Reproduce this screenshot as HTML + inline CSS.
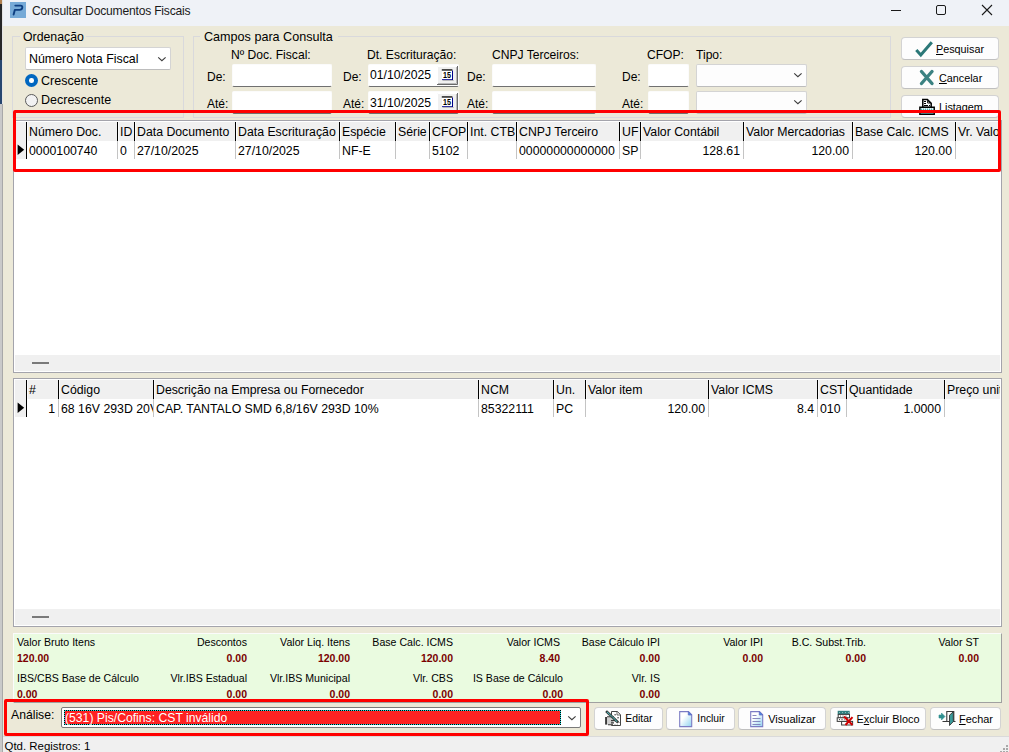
<!DOCTYPE html>
<html><head><meta charset="utf-8">
<style>
*{box-sizing:border-box;margin:0;padding:0}
html,body{width:1009px;height:752px;overflow:hidden;background:#ece9d8;font-family:"Liberation Sans",sans-serif;color:#000;position:relative}
.a{position:absolute}
.t{position:absolute;white-space:pre;line-height:1;font-size:12px}
.r{text-align:right}
.inp{position:absolute;background:#fff;border:1px solid #fbfbfb;border-bottom:1px solid #707070;border-radius:2px}
.cmb{position:absolute;background:#fdfdfd;border:1px solid #d4d4d4;border-radius:2px;border-bottom-color:#bdbdbd}
.btn{position:absolute;background:#fdfdfd;border:1px solid #d3d3d3;border-bottom-color:#c0c0c0;border-radius:4px}
.gb{position:absolute;border:1px solid #d9d9dc;}
.hdr{position:absolute;background:#f0f0f0}
.vs{position:absolute;width:1px;background:#000}
.vg{position:absolute;width:1px;background:#c8c8c8}
.grn .t{font-size:11px}
.val{font-weight:bold;color:#800000;font-size:10.5px!important}
</style></head><body>
<!-- desktop strip -->
<div class="a" style="left:0;top:0;width:2px;height:752px;background:#c9c9c9"></div>
<div class="a" style="left:0;top:0;width:2px;height:4px;background:#b08050"></div>
<div class="a" style="left:0;top:4px;width:2px;height:56px;background:#262626"></div>
<div class="a" style="left:0;top:60px;width:2px;height:44px;background:#26466f"></div>
<div class="a" style="left:2px;top:0;width:1px;height:104px;background:#e4e4e4"></div>
<div class="a" style="left:2px;top:104px;width:1px;height:648px;background:#a8a8a8"></div>
<!-- title bar -->
<div class="a" style="left:3px;top:0;width:1006px;height:26px;background:#eff2f7"></div>
<div class="a" style="left:10px;top:2px;width:16px;height:16px;background:#76aad7"></div>
<svg class="a" style="left:10px;top:2px" width="16" height="16" viewBox="0 0 16 16"><path d="M5.3 3.6 H10.5 Q12.6 3.6 12.3 5.6 Q12 7.8 9.6 7.9 H4.8 L3.6 12.6" fill="none" stroke="#0e3f82" stroke-width="1.9" stroke-linecap="round" stroke-linejoin="round"/></svg>
<div class="t" style="left:32px;top:4.8px;font-size:12.1px;letter-spacing:-0.2px;color:#1a1a1a;-webkit-font-smoothing:antialiased">Consultar Documentos Fiscais</div>
<div class="a" style="left:891px;top:10px;width:10px;height:1px;background:#1a1a1a"></div>
<div class="a" style="left:936px;top:5px;width:10px;height:10px;border:1px solid #1a1a1a;border-radius:2px"></div>
<svg class="a" style="left:981px;top:4px" width="12" height="12" viewBox="0 0 12 12"><path d="M1 1 L11 11 M11 1 L1 11" stroke="#1a1a1a" stroke-width="1.1"/></svg>

<!-- Ordenacao group -->
<div class="gb" style="left:12px;top:36px;width:172px;height:82px"></div>
<div class="a" style="left:20px;top:30px;width:66px;height:12px;background:#ece9d8"></div>
<div class="t" style="left:23px;top:30.5px;font-size:12.3px">Ordenação</div>
<div class="cmb" style="left:25px;top:47px;width:146px;height:23px;background:#fff"></div>
<div class="t" style="left:29px;top:53px;font-size:12.4px">Número Nota Fiscal</div>
<svg class="a" style="left:157px;top:56px" width="10" height="7" viewBox="0 0 10 7"><path d="M1.2 1.3 L4.9 4.7 L8.6 1.3" fill="none" stroke="#3c3c3c" stroke-width="1.1"/></svg>
<div class="a" style="left:25px;top:74px;width:13px;height:13px;border-radius:50%;background:#0067c0"></div>
<div class="a" style="left:29.2px;top:78.2px;width:4.6px;height:4.6px;border-radius:50%;background:#fff"></div>
<div class="t" style="left:41px;top:74.5px;font-size:12.5px">Crescente</div>
<div class="a" style="left:25px;top:94px;width:13px;height:13px;border-radius:50%;background:#f2f2f2;border:1px solid #5a5a5a"></div>
<div class="t" style="left:41px;top:94.3px;font-size:12.5px">Decrescente</div>

<!-- Campos group -->
<div class="gb" style="left:193px;top:36px;width:698px;height:82px"></div>
<div class="a" style="left:200px;top:30px;width:138px;height:12px;background:#ece9d8"></div>
<div class="t" style="left:204px;top:31px;font-size:12.6px">Campos para Consulta</div>

<div class="t" style="left:231px;top:48.8px;font-size:12.1px">Nº Doc. Fiscal:</div>
<div class="t" style="left:367px;top:48.8px;font-size:12.1px">Dt. Escrituração:</div>
<div class="t" style="left:492px;top:48.8px;font-size:12.1px">CNPJ Terceiros:</div>
<div class="t" style="left:647px;top:48.8px;font-size:12.1px">CFOP:</div>
<div class="t" style="left:696px;top:48.8px;font-size:12.1px">Tipo:</div>

<div class="t" style="left:207px;top:70.8px">De:</div>
<div class="t" style="left:207px;top:97.8px">Até:</div>
<div class="t" style="left:343px;top:70.8px">De:</div>
<div class="t" style="left:343px;top:97.8px">Até:</div>
<div class="t" style="left:467px;top:70.8px">De:</div>
<div class="t" style="left:467px;top:97.8px">Até:</div>
<div class="t" style="left:622px;top:70.8px">De:</div>
<div class="t" style="left:622px;top:97.8px">Até:</div>

<div class="inp" style="left:232px;top:64px;width:100px;height:23px"></div>
<div class="inp" style="left:232px;top:91px;width:100px;height:23px"></div>
<div class="inp" style="left:368px;top:64px;width:91px;height:23px"></div>
<div class="inp" style="left:368px;top:91px;width:91px;height:23px"></div>
<div class="inp" style="left:492px;top:64px;width:104px;height:23px"></div>
<div class="inp" style="left:492px;top:91px;width:104px;height:23px"></div>
<div class="inp" style="left:648px;top:64px;width:41px;height:23px"></div>
<div class="inp" style="left:648px;top:91px;width:41px;height:23px"></div>
<div class="t" style="left:370px;top:69px;font-size:12.2px">01/10/2025</div>
<div class="t" style="left:370px;top:96.7px;font-size:12.2px">31/10/2025</div>
<!-- calendar buttons -->
<svg class="a" style="left:437px;top:66px" width="22" height="20" viewBox="0 0 22 20"><rect x="0" y="0" width="21" height="19" fill="#f0f0f0"/><path d="M0.5 19 V0.5 H20.5" fill="none" stroke="#fff" stroke-width="1"/><path d="M0 18.5 H20.5 V0" fill="none" stroke="#6a6a6a" stroke-width="1"/><path d="M1 17.5 H19.5 V1" fill="none" stroke="#b8b8b8" stroke-width="1"/><rect x="5" y="4" width="11" height="10" fill="#fff"/><rect x="4.8" y="3.3" width="10.6" height="1.3" fill="#000"/><rect x="15" y="4.5" width="1" height="9.5" fill="#00008a"/><rect x="5" y="13.2" width="11" height="0.9" fill="#00008a"/><rect x="5.8" y="14.1" width="11" height="0.8" fill="#b0b0b0"/><text x="10.1" y="12.2" font-family="Liberation Sans" font-weight="bold" font-size="9.4" text-anchor="middle" fill="#000" textLength="8" lengthAdjust="spacingAndGlyphs">15</text></svg>
<svg class="a" style="left:437px;top:93px" width="22" height="20" viewBox="0 0 22 20"><rect x="0" y="0" width="21" height="19" fill="#f0f0f0"/><path d="M0.5 19 V0.5 H20.5" fill="none" stroke="#fff" stroke-width="1"/><path d="M0 18.5 H20.5 V0" fill="none" stroke="#6a6a6a" stroke-width="1"/><path d="M1 17.5 H19.5 V1" fill="none" stroke="#b8b8b8" stroke-width="1"/><rect x="5" y="4" width="11" height="10" fill="#fff"/><rect x="4.8" y="3.3" width="10.6" height="1.3" fill="#000"/><rect x="15" y="4.5" width="1" height="9.5" fill="#00008a"/><rect x="5" y="13.2" width="11" height="0.9" fill="#00008a"/><rect x="5.8" y="14.1" width="11" height="0.8" fill="#b0b0b0"/><text x="10.1" y="12.2" font-family="Liberation Sans" font-weight="bold" font-size="9.4" text-anchor="middle" fill="#000" textLength="8" lengthAdjust="spacingAndGlyphs">15</text></svg>
<div class="cmb" style="left:696px;top:64px;width:111px;height:23px"></div>
<div class="cmb" style="left:696px;top:91px;width:111px;height:23px"></div>
<svg class="a" style="left:793px;top:72px" width="10" height="7" viewBox="0 0 10 7"><path d="M1.2 1.3 L4.9 4.7 L8.6 1.3" fill="none" stroke="#3c3c3c" stroke-width="1.1"/></svg>
<svg class="a" style="left:793px;top:99px" width="10" height="7" viewBox="0 0 10 7"><path d="M1.2 1.3 L4.9 4.7 L8.6 1.3" fill="none" stroke="#3c3c3c" stroke-width="1.1"/></svg>

<!-- buttons right -->
<div class="btn" style="left:901px;top:37px;width:98px;height:23px"></div>
<div class="btn" style="left:901px;top:66px;width:98px;height:23px"></div>
<div class="btn" style="left:901px;top:95px;width:98px;height:23px"></div>
<div class="t" style="left:936px;top:43.5px;font-size:10.8px"><u>P</u>esquisar</div>
<div class="t" style="left:939px;top:72.5px;font-size:10.8px"><u>C</u>ancelar</div>
<div class="t" style="left:939px;top:101.5px;font-size:10.8px"><u>L</u>istagem</div>

<!-- GRID 1 -->
<div class="a" style="left:13px;top:120px;width:989px;height:253px;background:#fff;border:1px solid #a4a4ac"></div>
<div class="hdr" style="left:15px;top:122px;width:985px;height:19px"></div>
<div class="hdr" style="left:15px;top:141px;width:11px;height:18px"></div>
<div class="hdr" style="left:15px;top:355px;width:985px;height:16px"></div>
<div class="a" style="left:32px;top:362px;width:17px;height:2px;background:#7a7a7a"></div>
<div class="a" style="left:26px;top:122px;width:1px;height:19px;background:#000"></div>
<div class="a" style="left:27px;top:122px;width:1px;height:19px;background:#fafafa"></div>
<div class="a" style="left:26px;top:141px;width:1px;height:18px;background:#000"></div>
<div class="a" style="left:117px;top:122px;width:1px;height:19px;background:#000"></div>
<div class="a" style="left:118px;top:122px;width:1px;height:19px;background:#fafafa"></div>
<div class="a" style="left:117px;top:141px;width:1px;height:18px;background:#c4c4c4"></div>
<div class="a" style="left:134px;top:122px;width:1px;height:19px;background:#000"></div>
<div class="a" style="left:135px;top:122px;width:1px;height:19px;background:#fafafa"></div>
<div class="a" style="left:134px;top:141px;width:1px;height:18px;background:#c4c4c4"></div>
<div class="a" style="left:235px;top:122px;width:1px;height:19px;background:#000"></div>
<div class="a" style="left:236px;top:122px;width:1px;height:19px;background:#fafafa"></div>
<div class="a" style="left:235px;top:141px;width:1px;height:18px;background:#c4c4c4"></div>
<div class="a" style="left:339px;top:122px;width:1px;height:19px;background:#000"></div>
<div class="a" style="left:340px;top:122px;width:1px;height:19px;background:#fafafa"></div>
<div class="a" style="left:339px;top:141px;width:1px;height:18px;background:#c4c4c4"></div>
<div class="a" style="left:395px;top:122px;width:1px;height:19px;background:#000"></div>
<div class="a" style="left:396px;top:122px;width:1px;height:19px;background:#fafafa"></div>
<div class="a" style="left:395px;top:141px;width:1px;height:18px;background:#c4c4c4"></div>
<div class="a" style="left:429px;top:122px;width:1px;height:19px;background:#000"></div>
<div class="a" style="left:430px;top:122px;width:1px;height:19px;background:#fafafa"></div>
<div class="a" style="left:429px;top:141px;width:1px;height:18px;background:#c4c4c4"></div>
<div class="a" style="left:467px;top:122px;width:1px;height:19px;background:#000"></div>
<div class="a" style="left:468px;top:122px;width:1px;height:19px;background:#fafafa"></div>
<div class="a" style="left:467px;top:141px;width:1px;height:18px;background:#c4c4c4"></div>
<div class="a" style="left:516px;top:122px;width:1px;height:19px;background:#000"></div>
<div class="a" style="left:517px;top:122px;width:1px;height:19px;background:#fafafa"></div>
<div class="a" style="left:516px;top:141px;width:1px;height:18px;background:#c4c4c4"></div>
<div class="a" style="left:619px;top:122px;width:1px;height:19px;background:#000"></div>
<div class="a" style="left:620px;top:122px;width:1px;height:19px;background:#fafafa"></div>
<div class="a" style="left:619px;top:141px;width:1px;height:18px;background:#c4c4c4"></div>
<div class="a" style="left:640px;top:122px;width:1px;height:19px;background:#000"></div>
<div class="a" style="left:641px;top:122px;width:1px;height:19px;background:#fafafa"></div>
<div class="a" style="left:640px;top:141px;width:1px;height:18px;background:#c4c4c4"></div>
<div class="a" style="left:743px;top:122px;width:1px;height:19px;background:#000"></div>
<div class="a" style="left:744px;top:122px;width:1px;height:19px;background:#fafafa"></div>
<div class="a" style="left:743px;top:141px;width:1px;height:18px;background:#c4c4c4"></div>
<div class="a" style="left:852px;top:122px;width:1px;height:19px;background:#000"></div>
<div class="a" style="left:853px;top:122px;width:1px;height:19px;background:#fafafa"></div>
<div class="a" style="left:852px;top:141px;width:1px;height:18px;background:#c4c4c4"></div>
<div class="a" style="left:955px;top:122px;width:1px;height:19px;background:#000"></div>
<div class="a" style="left:956px;top:122px;width:1px;height:19px;background:#fafafa"></div>
<div class="a" style="left:955px;top:141px;width:1px;height:18px;background:#c4c4c4"></div>
<div class="a" style="left:28px;top:120px;width:89px;height:40px;overflow:hidden"><div class="t" style="left:1px;top:5.59px;font-size:12.3px;">Número Doc.</div></div>
<div class="a" style="left:119px;top:120px;width:15px;height:40px;overflow:hidden"><div class="t" style="left:1px;top:5.59px;font-size:12.3px;">ID</div></div>
<div class="a" style="left:136px;top:120px;width:99px;height:40px;overflow:hidden"><div class="t" style="left:1px;top:5.59px;font-size:12.3px;">Data Documento</div></div>
<div class="a" style="left:237px;top:120px;width:102px;height:40px;overflow:hidden"><div class="t" style="left:1px;top:5.59px;font-size:12.3px;">Data Escrituração</div></div>
<div class="a" style="left:341px;top:120px;width:54px;height:40px;overflow:hidden"><div class="t" style="left:1px;top:5.59px;font-size:12.3px;">Espécie</div></div>
<div class="a" style="left:397px;top:120px;width:32px;height:40px;overflow:hidden"><div class="t" style="left:1px;top:5.59px;font-size:12.3px;">Série</div></div>
<div class="a" style="left:431px;top:120px;width:36px;height:40px;overflow:hidden"><div class="t" style="left:1px;top:5.59px;font-size:12.3px;">CFOP</div></div>
<div class="a" style="left:469px;top:120px;width:47px;height:40px;overflow:hidden"><div class="t" style="left:1px;top:5.59px;font-size:12.3px;">Int. CTB</div></div>
<div class="a" style="left:518px;top:120px;width:101px;height:40px;overflow:hidden"><div class="t" style="left:1px;top:5.59px;font-size:12.3px;">CNPJ Terceiro</div></div>
<div class="a" style="left:621px;top:120px;width:19px;height:40px;overflow:hidden"><div class="t" style="left:1px;top:5.59px;font-size:12.3px;">UF</div></div>
<div class="a" style="left:642px;top:120px;width:101px;height:40px;overflow:hidden"><div class="t" style="left:1px;top:5.59px;font-size:12.3px;">Valor Contábil</div></div>
<div class="a" style="left:745px;top:120px;width:107px;height:40px;overflow:hidden"><div class="t" style="left:1px;top:5.59px;font-size:12.3px;">Valor Mercadorias</div></div>
<div class="a" style="left:854px;top:120px;width:101px;height:40px;overflow:hidden"><div class="t" style="left:1px;top:5.59px;font-size:12.3px;">Base Calc. ICMS</div></div>
<div class="a" style="left:957px;top:120px;width:43px;height:40px;overflow:hidden"><div class="t" style="left:1px;top:5.59px;font-size:12.3px;">Vr. Valor ICMS</div></div>
<div class="a" style="left:28px;top:120px;width:89px;height:40px;overflow:hidden"><div class="t" style="left:1px;top:24.99px;font-size:12.3px">0000100740</div></div>
<div class="a" style="left:119px;top:120px;width:15px;height:40px;overflow:hidden"><div class="t" style="left:1px;top:24.99px;font-size:12.3px">0</div></div>
<div class="a" style="left:136px;top:120px;width:99px;height:40px;overflow:hidden"><div class="t" style="left:1px;top:24.99px;font-size:12.3px">27/10/2025</div></div>
<div class="a" style="left:237px;top:120px;width:102px;height:40px;overflow:hidden"><div class="t" style="left:1px;top:24.99px;font-size:12.3px">27/10/2025</div></div>
<div class="a" style="left:341px;top:120px;width:54px;height:40px;overflow:hidden"><div class="t" style="left:1px;top:24.99px;font-size:12.3px">NF-E</div></div>
<div class="a" style="left:431px;top:120px;width:36px;height:40px;overflow:hidden"><div class="t" style="left:1px;top:24.99px;font-size:12.3px">5102</div></div>
<div class="a" style="left:518px;top:120px;width:101px;height:40px;overflow:hidden"><div class="t" style="left:1px;top:24.99px;font-size:12.3px">00000000000000</div></div>
<div class="a" style="left:621px;top:120px;width:19px;height:40px;overflow:hidden"><div class="t" style="left:1px;top:24.99px;font-size:12.3px">SP</div></div>
<div class="a" style="left:642px;top:120px;width:101px;height:40px;overflow:hidden"><div class="t" style="right:3px;top:24.99px;font-size:12.3px">128.61</div></div>
<div class="a" style="left:745px;top:120px;width:107px;height:40px;overflow:hidden"><div class="t" style="right:3px;top:24.99px;font-size:12.3px">120.00</div></div>
<div class="a" style="left:854px;top:120px;width:101px;height:40px;overflow:hidden"><div class="t" style="right:3px;top:24.99px;font-size:12.3px">120.00</div></div>
<svg class="a" style="left:17px;top:144px" width="8" height="12" viewBox="0 0 8 12"><path d="M0.6 0.6 L7.2 5.8 L0.6 11Z" fill="#000"/></svg>

<!-- GRID 2 -->
<div class="a" style="left:13px;top:378px;width:989px;height:249px;background:#fff;border:1px solid #a4a4ac"></div>
<div class="hdr" style="left:15px;top:380px;width:985px;height:19px"></div>
<div class="hdr" style="left:15px;top:399px;width:11px;height:18px"></div>
<div class="hdr" style="left:15px;top:609px;width:985px;height:16px"></div>
<div class="a" style="left:32px;top:616px;width:17px;height:2px;background:#7a7a7a"></div>
<div class="a" style="left:26px;top:380px;width:1px;height:19px;background:#000"></div>
<div class="a" style="left:27px;top:380px;width:1px;height:19px;background:#fafafa"></div>
<div class="a" style="left:26px;top:399px;width:1px;height:18px;background:#000"></div>
<div class="a" style="left:58px;top:380px;width:1px;height:19px;background:#000"></div>
<div class="a" style="left:59px;top:380px;width:1px;height:19px;background:#fafafa"></div>
<div class="a" style="left:58px;top:399px;width:1px;height:18px;background:#c4c4c4"></div>
<div class="a" style="left:153px;top:380px;width:1px;height:19px;background:#000"></div>
<div class="a" style="left:154px;top:380px;width:1px;height:19px;background:#fafafa"></div>
<div class="a" style="left:153px;top:399px;width:1px;height:18px;background:#c4c4c4"></div>
<div class="a" style="left:478px;top:380px;width:1px;height:19px;background:#000"></div>
<div class="a" style="left:479px;top:380px;width:1px;height:19px;background:#fafafa"></div>
<div class="a" style="left:478px;top:399px;width:1px;height:18px;background:#c4c4c4"></div>
<div class="a" style="left:553px;top:380px;width:1px;height:19px;background:#000"></div>
<div class="a" style="left:554px;top:380px;width:1px;height:19px;background:#fafafa"></div>
<div class="a" style="left:553px;top:399px;width:1px;height:18px;background:#c4c4c4"></div>
<div class="a" style="left:585px;top:380px;width:1px;height:19px;background:#000"></div>
<div class="a" style="left:586px;top:380px;width:1px;height:19px;background:#fafafa"></div>
<div class="a" style="left:585px;top:399px;width:1px;height:18px;background:#c4c4c4"></div>
<div class="a" style="left:708px;top:380px;width:1px;height:19px;background:#000"></div>
<div class="a" style="left:709px;top:380px;width:1px;height:19px;background:#fafafa"></div>
<div class="a" style="left:708px;top:399px;width:1px;height:18px;background:#c4c4c4"></div>
<div class="a" style="left:817px;top:380px;width:1px;height:19px;background:#000"></div>
<div class="a" style="left:818px;top:380px;width:1px;height:19px;background:#fafafa"></div>
<div class="a" style="left:817px;top:399px;width:1px;height:18px;background:#c4c4c4"></div>
<div class="a" style="left:846px;top:380px;width:1px;height:19px;background:#000"></div>
<div class="a" style="left:847px;top:380px;width:1px;height:19px;background:#fafafa"></div>
<div class="a" style="left:846px;top:399px;width:1px;height:18px;background:#c4c4c4"></div>
<div class="a" style="left:944px;top:380px;width:1px;height:19px;background:#000"></div>
<div class="a" style="left:945px;top:380px;width:1px;height:19px;background:#fafafa"></div>
<div class="a" style="left:944px;top:399px;width:1px;height:18px;background:#c4c4c4"></div>
<div class="a" style="left:28px;top:378px;width:30px;height:40px;overflow:hidden"><div class="t" style="left:1px;top:5.59px;font-size:12.3px;">#</div></div>
<div class="a" style="left:60px;top:378px;width:93px;height:40px;overflow:hidden"><div class="t" style="left:1px;top:5.59px;font-size:12.3px;">Código</div></div>
<div class="a" style="left:155px;top:378px;width:323px;height:40px;overflow:hidden"><div class="t" style="left:1px;top:5.59px;font-size:12.3px;">Descrição na Empresa ou Fornecedor</div></div>
<div class="a" style="left:480px;top:378px;width:73px;height:40px;overflow:hidden"><div class="t" style="left:1px;top:5.59px;font-size:12.3px;">NCM</div></div>
<div class="a" style="left:555px;top:378px;width:30px;height:40px;overflow:hidden"><div class="t" style="left:1px;top:5.59px;font-size:12.3px;">Un.</div></div>
<div class="a" style="left:587px;top:378px;width:121px;height:40px;overflow:hidden"><div class="t" style="left:1px;top:5.59px;font-size:12.3px;">Valor item</div></div>
<div class="a" style="left:710px;top:378px;width:107px;height:40px;overflow:hidden"><div class="t" style="left:1px;top:5.59px;font-size:12.3px;">Valor ICMS</div></div>
<div class="a" style="left:819px;top:378px;width:27px;height:40px;overflow:hidden"><div class="t" style="left:1px;top:5.59px;font-size:12.3px;">CST</div></div>
<div class="a" style="left:848px;top:378px;width:96px;height:40px;overflow:hidden"><div class="t" style="left:1px;top:5.59px;font-size:12.3px;">Quantidade</div></div>
<div class="a" style="left:946px;top:378px;width:54px;height:40px;overflow:hidden"><div class="t" style="left:1px;top:5.59px;font-size:12.3px;">Preço unitário</div></div>
<div class="a" style="left:28px;top:378px;width:30px;height:40px;overflow:hidden"><div class="t" style="right:3px;top:24.99px;font-size:12.3px">1</div></div>
<div class="a" style="left:60px;top:378px;width:93px;height:40px;overflow:hidden"><div class="t" style="left:1px;top:24.99px;font-size:12.3px">68 16V 293D 20V</div></div>
<div class="a" style="left:155px;top:378px;width:323px;height:40px;overflow:hidden"><div class="t" style="left:1px;top:24.99px;font-size:12.3px">CAP. TANTALO SMD 6,8/16V 293D 10%</div></div>
<div class="a" style="left:480px;top:378px;width:73px;height:40px;overflow:hidden"><div class="t" style="left:1px;top:24.99px;font-size:12.3px">85322111</div></div>
<div class="a" style="left:555px;top:378px;width:30px;height:40px;overflow:hidden"><div class="t" style="left:1px;top:24.99px;font-size:12.3px">PC</div></div>
<div class="a" style="left:587px;top:378px;width:121px;height:40px;overflow:hidden"><div class="t" style="right:3px;top:24.99px;font-size:12.3px">120.00</div></div>
<div class="a" style="left:710px;top:378px;width:107px;height:40px;overflow:hidden"><div class="t" style="right:3px;top:24.99px;font-size:12.3px">8.4</div></div>
<div class="a" style="left:819px;top:378px;width:27px;height:40px;overflow:hidden"><div class="t" style="left:1px;top:24.99px;font-size:12.3px">010</div></div>
<div class="a" style="left:848px;top:378px;width:96px;height:40px;overflow:hidden"><div class="t" style="right:3px;top:24.99px;font-size:12.3px">1.0000</div></div>
<svg class="a" style="left:17px;top:402px" width="8" height="12" viewBox="0 0 8 12"><path d="M0.6 0.6 L7.2 5.8 L0.6 11Z" fill="#000"/></svg>

<!-- GREEN panel -->
<div class="a grn" style="left:13px;top:633px;width:989px;height:70px;background:#eafbe0;border-right:1px solid #a0a0a0;border-bottom:1px solid #a0a0a0;border-top:1px solid #fbfbfb;border-left:1px solid #fbfbfb"></div>

<!-- Analise -->
<div class="t" style="left:11px;top:708.5px;font-size:12.2px">Análise:</div>
<div class="a" style="left:61px;top:707px;width:520px;height:21px;background:#fff;border:1px solid #7a7a7a;border-radius:2px"></div>
<div class="a" style="left:64px;top:710px;width:497px;height:15px;background:#ff2222;border:1px solid #20e0e0;outline:1px dotted #000;outline-offset:-1px"></div>
<div class="t" style="left:65px;top:711.8px;font-size:12.2px;color:#fff">(531) Pis/Cofins: CST inválido</div>
<svg class="a" style="left:567px;top:715px" width="10" height="7" viewBox="0 0 10 7"><path d="M1.2 1.3 L4.9 4.7 L8.6 1.3" fill="none" stroke="#3c3c3c" stroke-width="1.1"/></svg>

<!-- bottom buttons -->
<div class="btn" style="left:594px;top:707px;width:69px;height:23px"></div>
<div class="btn" style="left:666px;top:707px;width:69px;height:23px"></div>
<div class="btn" style="left:738px;top:707px;width:88px;height:23px"></div>
<div class="btn" style="left:830px;top:707px;width:96px;height:23px"></div>
<div class="btn" style="left:930px;top:707px;width:71px;height:23px"></div>

<div class="t" style="left:17px;top:637.03px;font-size:10.6px;">Valor Bruto Itens</div>
<div class="t" style="left:17px;top:653.11px;font-size:10.5px;font-weight:bold;color:#7a0000">120.00</div>
<div class="t" style="left:17px;top:673.03px;font-size:10.6px;">IBS/CBS Base de Cálculo</div>
<div class="t" style="left:17px;top:689.11px;font-size:10.5px;font-weight:bold;color:#7a0000">0.00</div>
<div class="t" style="right:762.0px;top:637.03px;font-size:10.6px;">Descontos</div>
<div class="t" style="right:762.0px;top:653.11px;font-size:10.5px;font-weight:bold;color:#7a0000">0.00</div>
<div class="t" style="right:659.0px;top:637.03px;font-size:10.6px;">Valor Liq. Itens</div>
<div class="t" style="right:659.0px;top:653.11px;font-size:10.5px;font-weight:bold;color:#7a0000">120.00</div>
<div class="t" style="right:556.0px;top:637.03px;font-size:10.6px;">Base Calc. ICMS</div>
<div class="t" style="right:556.0px;top:653.11px;font-size:10.5px;font-weight:bold;color:#7a0000">120.00</div>
<div class="t" style="right:449.0px;top:637.03px;font-size:10.6px;">Valor ICMS</div>
<div class="t" style="right:449.0px;top:653.11px;font-size:10.5px;font-weight:bold;color:#7a0000">8.40</div>
<div class="t" style="right:349.0px;top:637.03px;font-size:10.6px;">Base Cálculo IPI</div>
<div class="t" style="right:349.0px;top:653.11px;font-size:10.5px;font-weight:bold;color:#7a0000">0.00</div>
<div class="t" style="right:246.0px;top:637.03px;font-size:10.6px;">Valor IPI</div>
<div class="t" style="right:246.0px;top:653.11px;font-size:10.5px;font-weight:bold;color:#7a0000">0.00</div>
<div class="t" style="right:143.0px;top:637.03px;font-size:10.6px;">B.C. Subst.Trib.</div>
<div class="t" style="right:143.0px;top:653.11px;font-size:10.5px;font-weight:bold;color:#7a0000">0.00</div>
<div class="t" style="right:30.0px;top:637.03px;font-size:10.6px;">Valor ST</div>
<div class="t" style="right:30.0px;top:653.11px;font-size:10.5px;font-weight:bold;color:#7a0000">0.00</div>
<div class="t" style="right:762.0px;top:673.03px;font-size:10.6px;">Vlr.IBS Estadual</div>
<div class="t" style="right:762.0px;top:689.11px;font-size:10.5px;font-weight:bold;color:#7a0000">0.00</div>
<div class="t" style="right:659.0px;top:673.03px;font-size:10.6px;">Vlr.IBS Municipal</div>
<div class="t" style="right:659.0px;top:689.11px;font-size:10.5px;font-weight:bold;color:#7a0000">0.00</div>
<div class="t" style="right:556.0px;top:673.03px;font-size:10.6px;">Vlr. CBS</div>
<div class="t" style="right:556.0px;top:689.11px;font-size:10.5px;font-weight:bold;color:#7a0000">0.00</div>
<div class="t" style="right:446.0px;top:673.03px;font-size:10.6px;">IS Base de Cálculo</div>
<div class="t" style="right:446.0px;top:689.11px;font-size:10.5px;font-weight:bold;color:#7a0000">0.00</div>
<div class="t" style="right:349.0px;top:673.03px;font-size:10.6px;">Vlr. IS</div>
<div class="t" style="right:349.0px;top:689.11px;font-size:10.5px;font-weight:bold;color:#7a0000">0.00</div>
<div class="t" style="left:625.3px;top:714.20px;font-size:10.4px;">Editar</div>
<div class="t" style="left:697.3px;top:714.28px;font-size:10.3px;">Incluir</div>
<div class="t" style="left:768.2px;top:713.69px;font-size:11px;">Visualizar</div>
<div class="t" style="left:856.5px;top:713.77px;font-size:10.9px;">E<u>x</u>cluir Bloco</div>
<div class="t" style="left:959px;top:713.77px;font-size:10.9px;"><u>F</u>echar</div>

<!-- top icons -->
<svg class="a" style="left:914px;top:40px" width="20" height="18" viewBox="0 0 20 18"><path d="M2.3 10 L6.8 15 L17.8 2.2" fill="none" stroke="#2b7878" stroke-width="3" stroke-linecap="butt" stroke-linejoin="miter"/></svg>
<svg class="a" style="left:918px;top:68px" width="18" height="19" viewBox="0 0 18 19"><path d="M3.5 3.5 L14 15.5 M14 3.5 L3.5 15.5" fill="none" stroke="#3b8282" stroke-width="3.4" stroke-linecap="round"/></svg>
<svg class="a" style="left:918px;top:98px" width="18" height="18" viewBox="0 0 18 18"><path d="M4.8 1.6 H9.4 L13.2 5.4 V9.5 H4.8 Z" fill="#fff" stroke="#000" stroke-width="1.5"/><path d="M9.6 2.6 L9.6 5 L12 5" fill="none" stroke="#000" stroke-width="0.9"/><g shape-rendering="crispEdges" fill="#000"><rect x="6" y="3" width="2" height="1"/><rect x="6" y="5" width="2" height="1"/><rect x="6" y="7" width="4" height="1"/><rect x="11" y="7" width="1" height="1"/></g><path d="M1.9 9.2 H16.2 V16.2 H1.9 Z" fill="#fff" stroke="#000" stroke-width="1.5"/><path d="M2.8 11.2 H15.4" stroke="#2aa0a0" stroke-width="1.4" stroke-dasharray="1 1"/><rect x="2.8" y="14.3" width="12.6" height="1.3" fill="#1f8080"/></svg>
<!-- bottom icons -->
<svg class="a" style="left:604px;top:710px" width="18" height="17" viewBox="0 0 18 17"><path d="M7.5 1.5 H13.3 L16.5 4.7 V15.5 H7.5 Z" fill="#fff" stroke="#444" stroke-width="1"/><path d="M13 1.5 V5 H16.5" fill="none" stroke="#444" stroke-width="0.8"/><path d="M10.3 4.8 H12 M13.2 7.8 H15 M14.6 12.5 H15.4 M10.5 15 H11.5 M12.8 15 H13.6" stroke="#444" stroke-width="1"/><rect x="3" y="6.8" width="6" height="8" fill="#cfcfcf"/><rect x="1.1" y="7" width="1.9" height="7.6" fill="#3a3a3a"/><path d="M3 6.8 H9.8 M7 10.6 H12.3 M7 12.9 H10 M4 14.8 H9" stroke="#3a3a3a" stroke-width="1.1"/><path d="M3 2 L13.2 11.6" stroke="#333" stroke-width="2.6" stroke-linecap="square"/><path d="M3 2 L13.2 11.6" stroke="#4db3b3" stroke-width="1.3" stroke-dasharray="1.1 0.5"/></svg>
<svg class="a" style="left:678px;top:710px" width="16" height="18" viewBox="0 0 16 18"><defs><linearGradient id="gd" x1="0" y1="0" x2="1" y2="1"><stop offset="0.35" stop-color="#fff"/><stop offset="1" stop-color="#8fd3f0"/></linearGradient></defs><path d="M1.7 1.6 H10.5 L13.7 4.8 V16.6 H1.7 Z" fill="url(#gd)" stroke="#7c7cc4" stroke-width="1.1"/><path d="M10.3 1.6 V5 H13.7 Z" fill="#3d8fe8" stroke="#6a6ac0" stroke-width="0.8"/></svg>
<svg class="a" style="left:749px;top:710px" width="16" height="18" viewBox="0 0 16 18"><path d="M1.7 1.6 H10.5 L13.7 4.8 V16.6 H1.7 Z" fill="url(#gd)" stroke="#7c7cc4" stroke-width="1.1"/><path d="M10.3 1.6 V5 H13.7 Z" fill="#3d8fe8" stroke="#6a6ac0" stroke-width="0.8"/><path d="M3.5 5.5 H7.5 M3.5 8.5 H11.5 M3.5 11.5 H11.5 M3.5 14.5 H11.5" stroke="#7c7cb8" stroke-width="0.9"/></svg>
<svg class="a" style="left:836px;top:710px" width="18" height="17" viewBox="0 0 18 17"><rect x="1.7" y="0.8" width="12" height="3.6" fill="#2f7f7f"/><path d="M3.5 2.6 H4 M6.5 2.6 H7 M9.5 2.6 H10 M12.4 2.6 H12.9" stroke="#fff" stroke-width="1"/><rect x="2.2" y="4.4" width="11.3" height="3.4" fill="#fff" stroke="#3a3a3a" stroke-width="1"/><rect x="1.2" y="7.8" width="10" height="3.6" fill="#fff" stroke="#3a3a3a" stroke-width="1"/><rect x="5.6" y="11.4" width="11" height="3.6" fill="#fff" stroke="#3a3a3a" stroke-width="1"/><path d="M4 6.1 H5 M6.5 6.1 H7.5 M9.5 6.1 H10.5 M3 9.6 H4 M5.5 9.6 H6.5 M8.5 9.6 H9" stroke="#3a3a3a" stroke-width="1"/><path d="M8 6.5 L16.5 15 M16.5 7.2 L9.5 15" stroke="#d00000" stroke-width="2"/></svg>
<svg class="a" style="left:937px;top:710px" width="20" height="17" viewBox="0 0 20 17"><path d="M2 5 H4.5 V3 L8 6.5 L4.5 10 V8 H2 Z" fill="#2f9090" stroke="#2f9090" stroke-width="0.6"/><path d="M5.5 11.5 H18.5 M9.8 11.5 V1.5 H16.8 V11.5" fill="none" stroke="#3a3a3a" stroke-width="1.1"/><path d="M12.5 5.2 L16.3 1.8 V11.6 L12.5 15.5 Z" fill="#3a9a9a" stroke="#333" stroke-width="0.9"/></svg>

<!-- status -->
<div class="a" style="left:3px;top:736px;width:1006px;height:16px;background:#f0f0f0;border-top:1px solid #dadada"></div><div class="a" style="left:1006px;top:745px;width:2px;height:2px;background:#a8a8a8"></div><div class="a" style="left:1003px;top:748px;width:2px;height:2px;background:#a8a8a8"></div><div class="a" style="left:1006px;top:748px;width:2px;height:2px;background:#a8a8a8"></div><div class="a" style="left:1000px;top:751px;width:2px;height:2px;background:#a8a8a8"></div><div class="a" style="left:1003px;top:751px;width:2px;height:2px;background:#a8a8a8"></div><div class="a" style="left:1006px;top:751px;width:2px;height:2px;background:#a8a8a8"></div>
<div class="t" style="left:4.5px;top:741px;font-size:11.45px">Qtd. Registros: 1</div>

<!-- red boxes -->
<div class="a" style="left:13px;top:110px;width:988px;height:62px;border:3px solid #ff0000;border-radius:2px"></div>
<div class="a" style="left:4px;top:699px;width:585px;height:37px;border:3px solid #ff0000;border-radius:2px"></div>
</body></html>
